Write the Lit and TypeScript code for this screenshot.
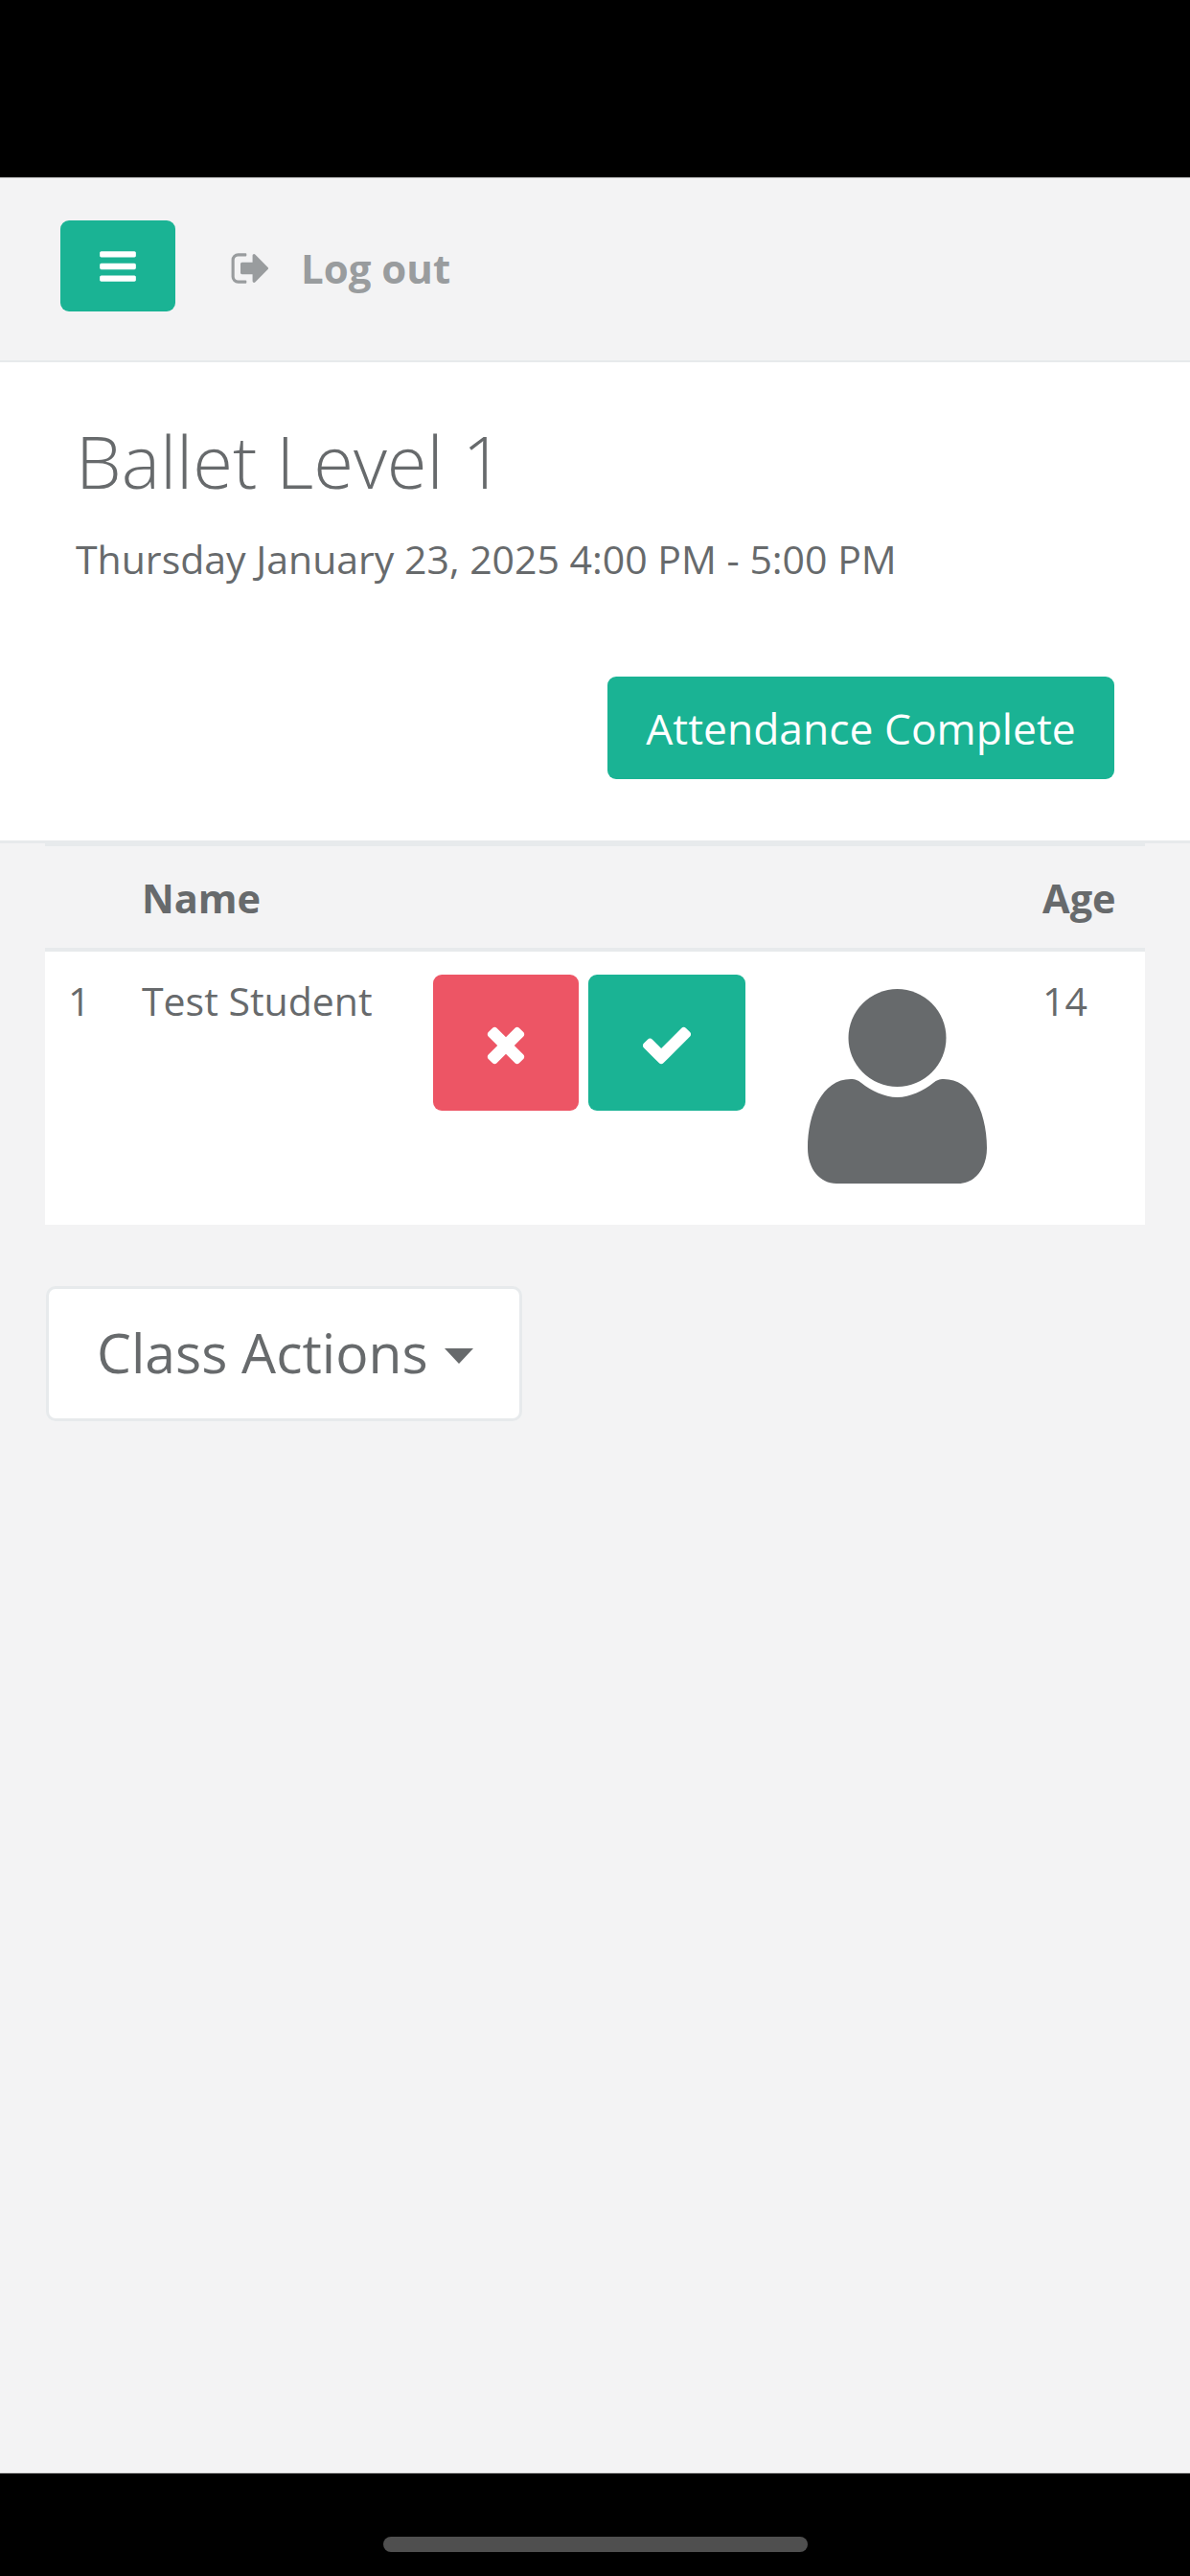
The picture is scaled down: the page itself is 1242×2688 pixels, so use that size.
import { LitElement, html, css } from "lit";
import { customElement } from "lit/decorators.js";

const bars = "M1664 1344v128q0 26-19 45t-45 19H192q-26 0-45-19t-19-45v-128q0-26 19-45t45-19h1408q26 0 45 19t19 45zm0-512v128q0 26-19 45t-45 19H192q-26 0-45-19t-19-45V832q0-26 19-45t45-19h1408q26 0 45 19t19 45zm0-512v128q0 26-19 45t-45 19H192q-26 0-45-19t-19-45V320q0-26 19-45t45-19h1408q26 0 45 19t19 45z";
const signOut = "M704 1440q0 4 1 20t.5 26.5-3 23.5-10 19.5-20.5 6.5h-320q-119 0-203.5-84.5t-84.5-203.5v-704q0-119 84.5-203.5t203.5-84.5h320q13 0 22.5 9.5t9.5 22.5q0 4 1 20t.5 26.5-3 23.5-10 19.5-20.5 6.5h-320q-66 0-113 47t-47 113v704q0 66 47 113t113 47h312l11.5 1 11.5 3 8 5.5 7 9 2 13.5zm928-544q0 26-19 45l-544 544q-19 19-45 19t-45-19-19-45v-288h-448q-26 0-45-19t-19-45v-384q0-26 19-45t45-19h448v-288q0-26 19-45t45-19 45 19l544 544q19 19 19 45z";
const times = "M1298 1290q0 40-28 68l-136 136q-28 28-68 28t-68-28l-294-294-294 294q-28 28-68 28t-68-28l-136-136q-28-28-28-68t28-68l294-294-294-294q-28-28-28-68t28-68l136-136q28-28 68-28t68 28l294 294 294-294q28-28 68-28t68 28l136 136q28 28 28 68t-28 68l-294 294 294 294q28 28 28 68z";
const check = "M1671 566q0 40-28 68l-724 724-136 136q-28 28-68 28t-68-28l-136-136-362-362q-28-28-28-68t28-68l136-136q28-28 68-28t68 28l294 295 656-657q28-28 68-28t68 28l136 136q28 28 28 68z";

const fa = (d: string, cls: string, vb = "0 0 1792 1792") => html`<svg class=${cls} viewBox=${vb} fill="currentColor" aria-hidden="true"><path d=${d}></path></svg>`;

@customElement("app-root")
export class AppRoot extends LitElement {
  static styles = css`
    :host {
      display: flex;
      flex-direction: column;
      width: 1242px;
      height: 2688px;
      background: #000;
      font-family: "Open Sans", "Liberation Sans", sans-serif;
      color: #676a6c;
    }
    .top-inset { height: 185px; flex: none; }
    .bottom-inset {
      height: 107px;
      flex: none;
      display: flex;
      justify-content: center;
      padding-top: 66px;
      box-sizing: border-box;
    }
    .home { width: 443px; height: 16px; border-radius: 8px; background: #4f4f4f; }
    .screen {
      flex: 1;
      background: #f3f3f4;
      display: flex;
      flex-direction: column;
      min-height: 0;
      border-top: 1px solid #c9c9c9;
      border-bottom: 1px solid #c9c9c9;
    }

    .nav {
      height: 192px;
      box-sizing: border-box;
      flex: none;
      border-bottom: 2px solid #e7eaec;
      padding: 44px 0 0 63px;
      display: flex;
      align-items: flex-start;
    }
    .menu {
      width: 120px;
      height: 95px;
      border-radius: 9px;
      background: #1ab394;
      color: #fff;
      display: flex;
      align-items: center;
      justify-content: center;
    }
    .i-bars { width: 44px; height: 44px; }
    .logout {
      margin-left: 57px;
      height: 99px;
      display: flex;
      align-items: center;
      color: #999c9e;
      font-size: 42px;
      font-weight: 700;
    }
    .i-out { width: 44px; height: 44px; margin-right: 30px; }

    .head {
      flex: none;
      height: 502px;
      box-sizing: border-box;
      background: #fff;
      border-bottom: 3px solid #e7eaec;
      padding: 49px 79px 0 79px;
      display: flex;
      flex-direction: column;
    }
    .title { margin: 0; font-size: 76px; font-weight: 300; line-height: 108px; }
    .date { margin: 18px 0 0; font-size: 41px; line-height: 60px; }
    .actions { display: flex; justify-content: flex-end; margin-top: 93px; }
    .complete {
      height: 107px;
      width: 529px;
      border-radius: 9px;
      background: #1ab394;
      color: #fff;
      font-size: 44.4px;
      display: flex;
      align-items: center;
      justify-content: center;
    }

    .table {
      margin: 0 47px;
      display: grid;
      grid-template-columns: 77px 304px 376px 260px 131px;
    }
    .th {
      height: 113px;
      box-sizing: border-box;
      border-top: 3px solid #e7eaec;
      border-bottom: 4px solid #e7eaec;
      font-size: 41.5px;
      font-weight: 700;
      padding: 24px 24px 0;
      line-height: 60px;
    }
    .td {
      background: #fff;
      height: 285px;
      box-sizing: border-box;
      padding: 24px;
      font-size: 41px;
      line-height: 54px;
    }
    .btns { display: flex; gap: 10px; }
    .btn {
      height: 142px;
      border-radius: 9px;
      color: #fff;
      display: flex;
      align-items: center;
      justify-content: center;
    }
    .no { width: 152px; background: #ed5565; }
    .yes { width: 164px; background: #1ab394; }
    .i-x { width: 58px; height: 58px; margin-top: 3px; }
    .avatar-cell { padding: 39px 0 0 39px; }
    .avatar { display: block; width: 187px; height: 204px; fill: #676a6c; }

    .dropdown {
      align-self: flex-start;
      margin: 64px 0 0 48px;
      width: 497px;
      height: 141px;
      box-sizing: border-box;
      background: #fff;
      border: 3px solid #e7eaec;
      border-radius: 10px;
      font-size: 57px;
      line-height: 78px;
      display: flex;
      align-items: center;
      padding: 0 0 3px 50px;
    }
    .caret {
      margin-left: 17px;
      margin-top: 8px;
      width: 0;
      height: 0;
      border-top: 16px solid #676a6c;
      border-left: 15.5px solid transparent;
      border-right: 15.5px solid transparent;
    }
  `;

  render() {
    return html`
      <div class="top-inset"></div>
      <div class="screen">
        <div class="nav">
          <div class="menu">${fa(bars, "i-bars")}</div>
          <div class="logout">${fa(signOut, "i-out")}<span>Log out</span></div>
        </div>
        <div class="head">
          <h1 class="title">Ballet Level 1</h1>
          <p class="date">Thursday January 23, 2025 4:00 PM - 5:00 PM</p>
          <div class="actions"><div class="complete">Attendance Complete</div></div>
        </div>
        <div class="table">
          <div class="th"></div>
          <div class="th">Name</div>
          <div class="th"></div>
          <div class="th"></div>
          <div class="th">Age</div>
          <div class="td">1</div>
          <div class="td">Test Student</div>
          <div class="td">
            <div class="btns">
              <div class="btn no">${fa(times, "i-x", "-192 0 1792 1792")}</div>
              <div class="btn yes">${fa(check, "i-x")}</div>
            </div>
          </div>
          <div class="td avatar-cell">
            <svg class="avatar" viewBox="0 0 187 204" aria-hidden="true">
              <circle cx="93.5" cy="51" r="51"></circle>
              <path d="M45 94C50 94 52 95 56 98C66 106 80 113 93.5 113C107 113 121 106 131 98C135 95 137 94 142 94C172 94 187 130 187 166C187 188 174 203 157 203H30C13 203 0 188 0 166C0 130 15 94 45 94Z"></path>
            </svg>
          </div>
          <div class="td">14</div>
        </div>
        <div class="dropdown"><span>Class Actions</span><span class="caret"></span></div>
      </div>
      <div class="bottom-inset"><div class="home"></div></div>
    `;
  }
}
